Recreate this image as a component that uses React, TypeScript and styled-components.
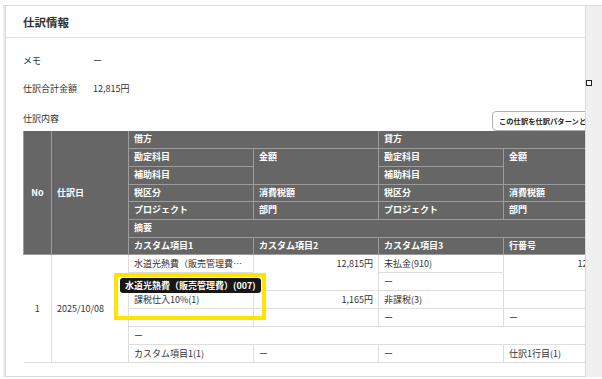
import React from "react";
import styled, { createGlobalStyle } from "styled-components";

const Global = createGlobalStyle`
  html, body { margin: 0; padding: 0; background: #fff; }
  body { font-family: "Noto Sans CJK JP", "Noto Sans", sans-serif; color: #333; }
`;

const Root = styled.div`
  width: 602px;
  height: 379px;
  overflow: hidden;
  padding: 5px 0 0 3px;
  box-sizing: border-box;
  background: #fff;
`;

const Frame = styled.div`
  display: flex;
  border-top: 1px solid #dcdcdc;
  border-left: 2px solid #ececec;
`;

const Card = styled.section`
  flex: 1;
  min-width: 0;
  height: 371px;
  box-sizing: border-box;
  border-left: 1px solid #d9d9d9;
  border-right: 1px solid #d9d9d9;
  border-bottom: 1px solid #d9d9d9;
  overflow: hidden;
  background: #fff;
`;

const Track = styled.div`
  position: relative;
  width: 16px;
  flex: none;
  background: #f0f0f0;
`;

const Handle = styled.span`
  position: absolute;
  left: 0;
  top: 74px;
  width: 6px;
  height: 6px;
  box-sizing: border-box;
  border: 1px solid #222;
  background: #fff;
`;

const Header = styled.header`
  height: 31px;
  display: flex;
  align-items: center;
  padding-left: 17px;
  border-bottom: 1px solid #e2e2e2;
`;

const Title = styled.h2`
  margin: 0;
  font-size: 11.5px;
  font-weight: 700;
  color: #333;
`;

const Body = styled.div`
  padding: 8px 0 0 17px;
  width: 660px;
`;

const InfoRow = styled.div`
  display: flex;
  align-items: center;
  height: 28px;
  font-size: 9px;
  color: #333;
`;

const Label = styled.span`
  width: 70px;
  flex: none;
`;

const SectionRow = styled.div`
  width: 629px;
  height: 29px;
  display: flex;
  align-items: flex-end;
  justify-content: space-between;
  font-size: 9px;
`;

const SectionLabel = styled.span`
  line-height: 20px;
  padding-bottom: 2px;
`;

const Button = styled.button`
  width: 160px;
  height: 20px;
  box-sizing: border-box;
  border: 1px solid #b0b0b0;
  border-radius: 4px;
  background: #fff;
  padding: 0 0 0 6px;
  text-align: left;
  white-space: nowrap;
  overflow: hidden;
  font-family: inherit;
  font-size: 7.3px;
  font-weight: 700;
  color: #222;
`;

const TableWrap = styled.div`
  position: relative;
  width: 596px;
`;

const Table = styled.table`
  width: 596px;
  table-layout: fixed;
  border-collapse: collapse;
  font-size: 9px;
`;

const HeadRow = styled.tr`
  height: 17.7px;
`;

const Th = styled.th<{ $center?: boolean; $middle?: boolean }>`
  background: #666;
  color: #fff;
  font-weight: 700;
  text-align: ${(p) => (p.$center ? "center" : "left")};
  vertical-align: ${(p) => (p.$middle ? "middle" : "top")};
  padding: 0 5px;
  line-height: 16px;
  border: 1px solid #9c9c9c;
  border-top: none;
  white-space: nowrap;
  overflow: hidden;
`;

const BodyRow = styled.tr`
  height: 18px;
`;

const Td = styled.td<{ $right?: boolean; $center?: boolean; $middle?: boolean }>`
  color: #333;
  text-align: ${(p) => (p.$right ? "right" : p.$center ? "center" : "left")};
  vertical-align: ${(p) => (p.$middle ? "middle" : "top")};
  padding: 0 5px;
  line-height: 17px;
  border: 1px solid #dedede;
  white-space: nowrap;
  overflow: hidden;
  text-overflow: ellipsis;
  &:first-child { border-left: none; }
`;

const Highlight = styled.div`
  position: absolute;
  left: 91px;
  top: 142px;
  width: 152px;
  height: 47px;
  box-sizing: border-box;
  border: 4px solid #ffe400;
  pointer-events: none;
`;

const Tooltip = styled.div`
  position: absolute;
  left: 97px;
  top: 147px;
  height: 15px;
  padding: 0 5px;
  border-radius: 3px;
  background: #161616;
  color: #fff;
  font-size: 9px;
  font-weight: 700;
  line-height: 15px;
  white-space: nowrap;
`;

export default function App() {
  return (
    <Root>
      <Global />
      <Frame>
        <Card>
          <Header>
            <Title>仕訳情報</Title>
          </Header>
          <Body>
            <InfoRow>
              <Label>メモ</Label>
              <span>ー</span>
            </InfoRow>
            <InfoRow>
              <Label>仕訳合計金額</Label>
              <span>12,815円</span>
            </InfoRow>
            <SectionRow>
              <SectionLabel>仕訳内容</SectionLabel>
              <Button>この仕訳を仕訳パターンとして登録</Button>
            </SectionRow>
            <TableWrap>
              <Table>
                <colgroup>
                  <col style={{ width: 28 }} />
                  <col style={{ width: 77 }} />
                  <col style={{ width: 125 }} />
                  <col style={{ width: 125 }} />
                  <col style={{ width: 125 }} />
                  <col style={{ width: 116 }} />
                </colgroup>
                <thead>
                  <HeadRow>
                    <Th rowSpan={7} $center $middle>No</Th>
                    <Th rowSpan={7} $middle>仕訳日</Th>
                    <Th colSpan={2}>借方</Th>
                    <Th colSpan={2}>貸方</Th>
                  </HeadRow>
                  <HeadRow>
                    <Th>勘定科目</Th>
                    <Th rowSpan={2}>金額</Th>
                    <Th>勘定科目</Th>
                    <Th rowSpan={2}>金額</Th>
                  </HeadRow>
                  <HeadRow>
                    <Th>補助科目</Th>
                    <Th>補助科目</Th>
                  </HeadRow>
                  <HeadRow>
                    <Th>税区分</Th>
                    <Th>消費税額</Th>
                    <Th>税区分</Th>
                    <Th>消費税額</Th>
                  </HeadRow>
                  <HeadRow>
                    <Th>プロジェクト</Th>
                    <Th>部門</Th>
                    <Th>プロジェクト</Th>
                    <Th>部門</Th>
                  </HeadRow>
                  <HeadRow>
                    <Th colSpan={4}>摘要</Th>
                  </HeadRow>
                  <HeadRow>
                    <Th>カスタム項目1</Th>
                    <Th>カスタム項目2</Th>
                    <Th>カスタム項目3</Th>
                    <Th>行番号</Th>
                  </HeadRow>
                </thead>
                <tbody>
                  <BodyRow>
                    <Td rowSpan={6} $center $middle>1</Td>
                    <Td rowSpan={6} $middle>2025/10/08</Td>
                    <Td>水道光熱費（販売管理費）(007)</Td>
                    <Td rowSpan={2} $right>12,815円</Td>
                    <Td>未払金(910)</Td>
                    <Td rowSpan={2} $right>12,815円</Td>
                  </BodyRow>
                  <BodyRow>
                    <Td>ー</Td>
                    <Td>ー</Td>
                  </BodyRow>
                  <BodyRow>
                    <Td>課税仕入10%(1)</Td>
                    <Td $right>1,165円</Td>
                    <Td>非課税(3)</Td>
                    <Td></Td>
                  </BodyRow>
                  <BodyRow>
                    <Td></Td>
                    <Td></Td>
                    <Td>ー</Td>
                    <Td>ー</Td>
                  </BodyRow>
                  <BodyRow>
                    <Td colSpan={4}>ー</Td>
                  </BodyRow>
                  <BodyRow>
                    <Td>カスタム項目1(1)</Td>
                    <Td>ー</Td>
                    <Td>ー</Td>
                    <Td>仕訳1行目(1)</Td>
                  </BodyRow>
                </tbody>
              </Table>
              <Highlight />
              <Tooltip>水道光熱費（販売管理費）(007)</Tooltip>
            </TableWrap>
          </Body>
        </Card>
        <Track>
          <Handle />
        </Track>
      </Frame>
    </Root>
  );
}
